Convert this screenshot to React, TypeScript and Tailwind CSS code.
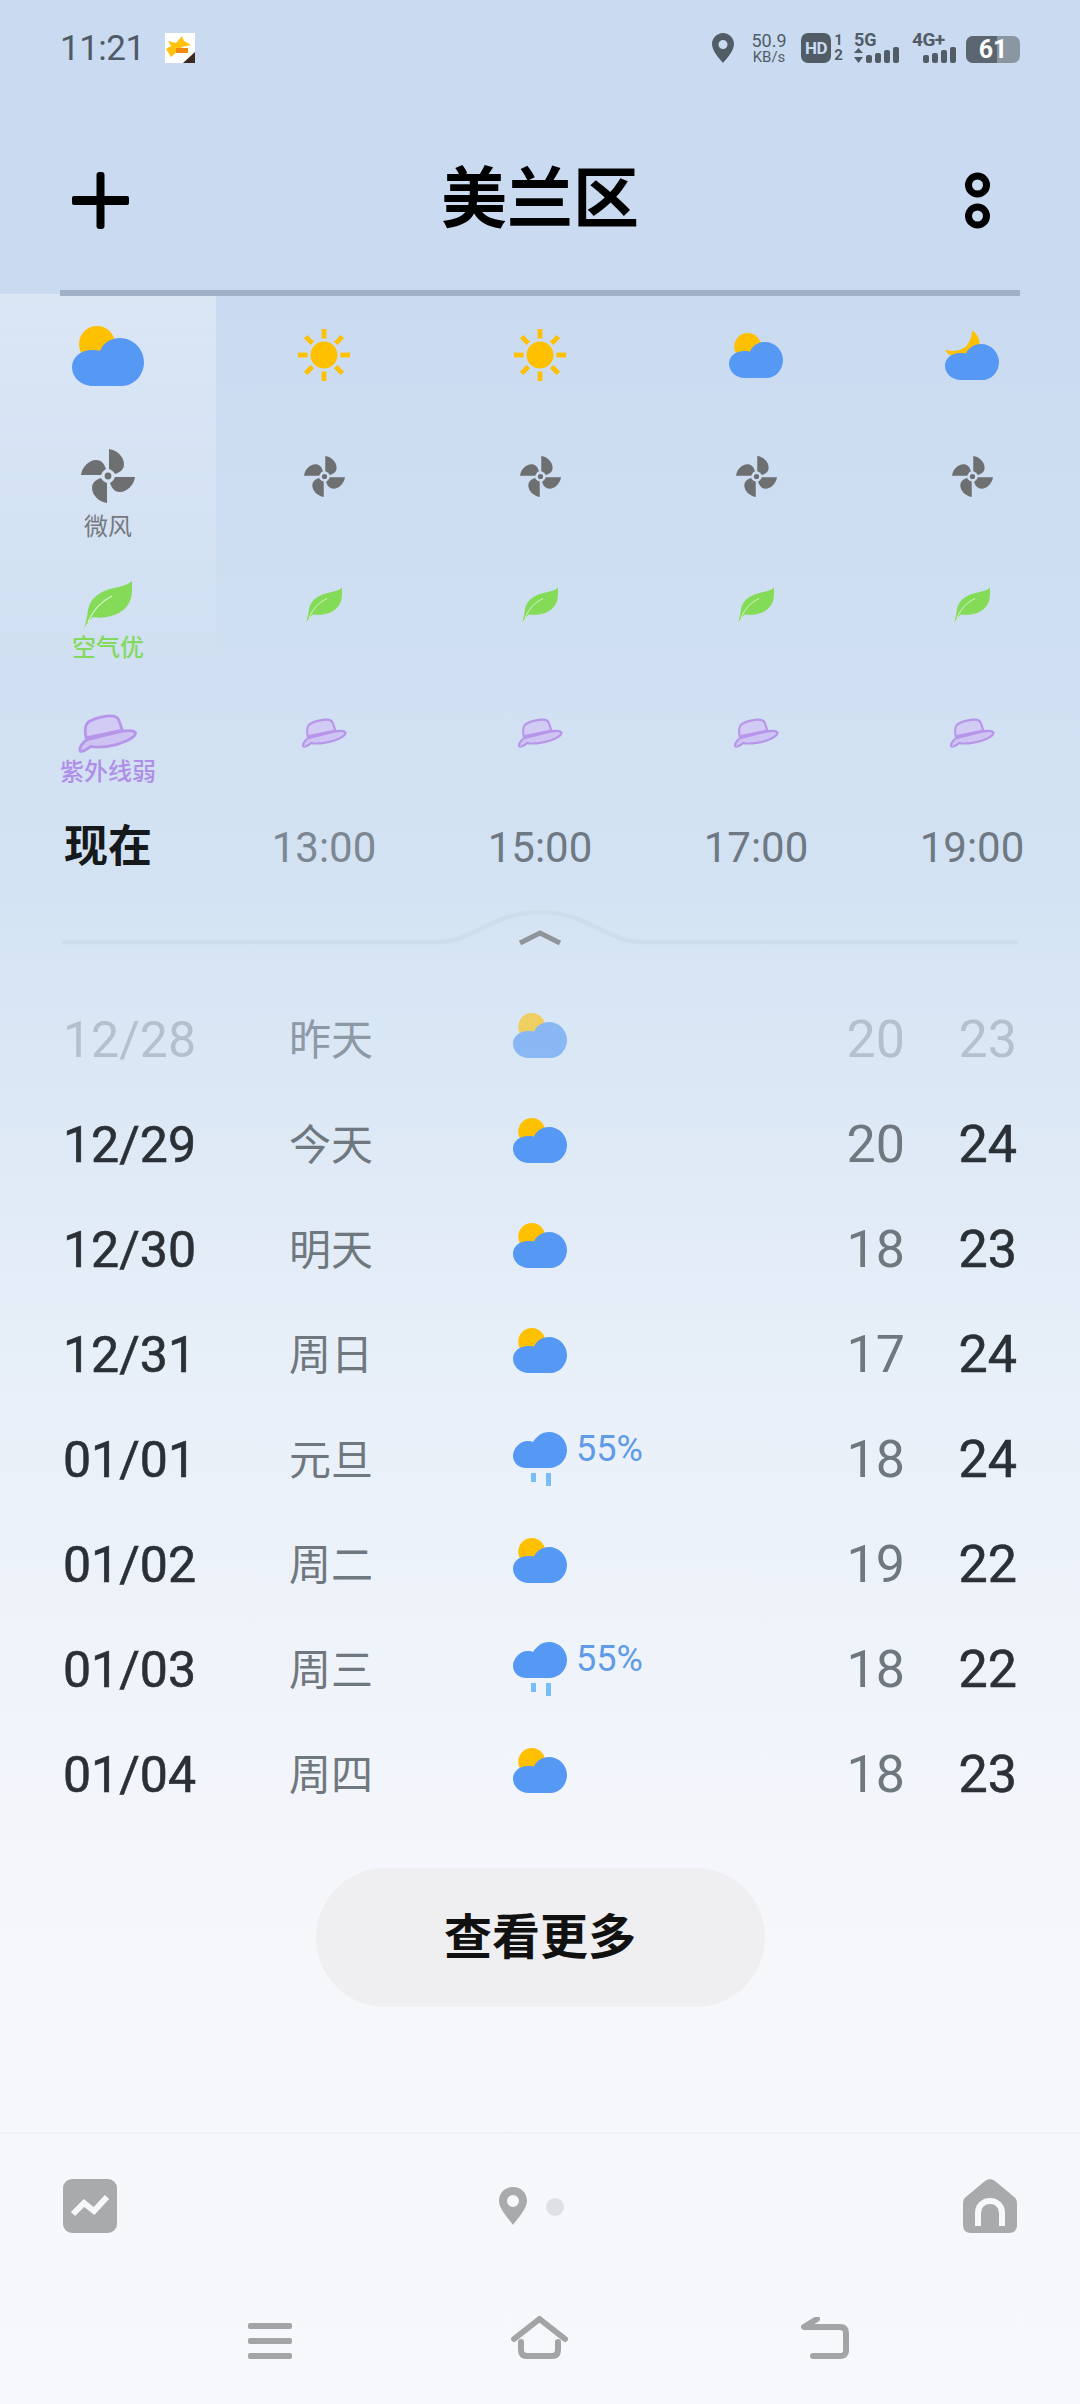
import React from "react";

const CLOUD = "M21 60C9 60 0 51 0 41C0 31 9 24 20 24C23 24 26 24 28 25C31 17 39 12 48 12C61 12 72 23 72 36C72 49 62 60 50 60Z";

function CloudSun({ w = 54, h = 45 }: { w?: number; h?: number }) {
  return (
    <svg width={w} height={h} viewBox="0 0 72 60" className="block">
      <circle cx="25" cy="18" r="18" fill="#ffc000" />
      <path d={CLOUD} fill="#5599f5" />
    </svg>
  );
}

function CloudMoon() {
  return (
    <svg width={54} height={50} viewBox="0 -6.6 72 66.6" className="block">
      <path d="M36 -6C44 -1 48 8 45 17C42 27 31 32 20 30C11 30 3 26 0 20C9 22 22 22 29 14C34 8 36 1 36 -6Z" fill="#ffc000" />
      <path d={CLOUD} fill="#5599f5" />
    </svg>
  );
}

function CloudRain() {
  return (
    <svg width={54} height={54} viewBox="0 0 54 54" className="block">
      <path d="M13 36C6 36 0 31 0 24C0 17 6 9 15 9C17 9 19 9 20 10C24 4 29 0 36 0C46 0 54 8 54 18C54 28 46 36 36 36Z" fill="#5599f5" />
      <rect x="18" y="41" width="5" height="9" fill="#79bdf5" />
      <rect x="33" y="41" width="5" height="13" fill="#79bdf5" />
    </svg>
  );
}

function Sun() {
  const angles = [0, 45, 90, 135, 180, 225, 270, 315];
  return (
    <svg width={52} height={52} viewBox="0 0 52 52" className="block">
      <circle cx="26" cy="26" r="13.5" fill="#ffc000" />
      {angles.map((a) => (
        <rect key={a} x="23.6" y="0" width="4.8" height="9.5" fill="#ffc000" transform={`rotate(${a} 26 26)`} />
      ))}
    </svg>
  );
}

function Wind({ size }: { size: number }) {
  const blade = "M28 0C36 1 43 8 43 15C43 20 40 23 34 25C33 23 31 21 28 20Z";
  return (
    <svg width={size} height={size} viewBox="0 0 54 54" className="block">
      {[0, 90, 180, 270].map((a) => (
        <path key={a} d={blade} fill="#6e6f71" transform={`rotate(${a} 27 27)`} />
      ))}
      <circle cx="27" cy="27" r="3.4" fill="#6e6f71" />
    </svg>
  );
}

function Leaf({ w, h }: { w: number; h: number }) {
  return (
    <svg width={w} height={h} viewBox="0 0 48 47" className="block">
      <path d="M48 0C44 4 38 5 30 7C16 10 6 17 4 29C3 36 2 42 0 47C3 42 6 39 9 36C13 37 20 37 27 35C40 32 48 22 48 10Z" fill="#84db57" />
      <path d="M4 41C9 29 16 21 28 15" fill="none" stroke="#dff5d2" strokeWidth="1.2" />
    </svg>
  );
}

function Hat({ w, h }: { w: number; h: number }) {
  return (
    <svg width={w} height={h} viewBox="-1 -1 62 42" className="block">
      <path d="M7 24C5 16 6 8 12 6C18 3 28 1 33 1C38 1 41 3 42 7L45 16Z" fill="#d2cbf5" stroke="#b796ea" strokeWidth="3" strokeLinejoin="round" />
      <path d="M8 26L45 17C52 16 58 16 59 19C59 24 44 31 30 33C22 34 16 34 12 33C8 36 3 39 1 38C-1 35 3 29 8 26Z" fill="#cdc4f3" stroke="#b796ea" strokeWidth="3" strokeLinejoin="round" />
    </svg>
  );
}

function Bars({ lead }: { lead?: boolean }) {
  return (
    <div className="flex items-end gap-[3px]">
      {lead && (
        <svg width="9" height="15" viewBox="0 0 9 15" className="block">
          <path d="M4.5 0L9 5H0Z M0 9H9L4.5 15Z" fill="#515c66" />
        </svg>
      )}
      <div className="w-[6px] h-[8px] rounded-[2px] bg-[#515c66]" />
      <div className="w-[6px] h-[10px] rounded-[2px] bg-[#515c66]" />
      <div className="w-[6px] h-[13px] rounded-[2px] bg-[#515c66]" />
      <div className="w-[6px] h-[16px] rounded-[2px] bg-[#515c66]" />
    </div>
  );
}

function StatusBar() {
  return (
    <div className="h-[96px] pl-[60px] pr-[60px] flex items-center">
      <span className="text-[35px] leading-none text-[#4f5a66] tracking-[-0.5px]">11:21</span>
      <svg width="30" height="30" viewBox="0 0 30 30" className="block ml-[20px]">
        <rect width="30" height="30" fill="#ffffff" />
        <path d="M3 8L11 10L17 3L19 8L26 12L17 14L14 17L6 24L1 16L6 13Z" fill="#ffc20e" />
        <rect x="11" y="15" width="12" height="5" fill="#f28a12" />
        <path d="M30 19V30H18Z" fill="#3a2a22" />
      </svg>
      <div className="flex-1" />
      <svg width="22" height="30" viewBox="0 0 22 30" className="block">
        <path fillRule="evenodd" d="M11 0C5 0 0 5 0 11C0 18 7 25 11 30C15 25 22 18 22 11C22 5 17 0 11 0ZM11 7A4.5 4.5 0 1 1 11 16A4.5 4.5 0 1 1 11 7Z" fill="#515c66" />
      </svg>
      <div className="ml-[16px] w-[38px] flex flex-col items-center text-[#515c66]">
        <span className="text-[18px] leading-[18px]">50.9</span>
        <span className="text-[15px] leading-[15px]">KB/s</span>
      </div>
      <div className="ml-[13px] w-[30px] h-[30px] rounded-[7px] bg-[#515c66] flex items-center justify-center">
        <span className="text-[17px] leading-none font-bold text-[#cadbf1] tracking-[-0.5px]">HD</span>
      </div>
      <div className="ml-[2px] w-[11px] flex flex-col items-center text-[#515c66] font-bold">
        <span className="text-[15px] leading-[15px]">1</span>
        <span className="text-[15px] leading-[15px]">2</span>
      </div>
      <div className="ml-[10px] w-[45px] flex flex-col items-start">
        <span className="text-[18px] leading-[14px] font-bold text-[#515c66]">5G</span>
        <Bars lead />
      </div>
      <div className="ml-[13px] w-[44px] flex flex-col items-end">
        <span className="text-[19px] leading-[14px] font-bold text-[#515c66] self-start tracking-[-0.5px]">4G+</span>
        <Bars />
      </div>
      <div className="ml-[10px] relative w-[54px] h-[27px] mt-[2px] rounded-[7px] overflow-hidden bg-[#8a96a2] flex items-center justify-center">
        <div className="absolute left-0 top-0 bottom-0 w-[31px] bg-[#5c6670]" />
        <span className="relative text-[25px] leading-none font-bold text-white">61</span>
      </div>
    </div>
  );
}

function Header() {
  return (
    <div className="h-[194px] pt-[14px] pl-[72px] pr-[90px] flex items-center justify-between">
      <svg width="57" height="57" viewBox="0 0 57 57" className="block">
        <rect x="24.5" y="0" width="8" height="57" rx="3" fill="#000" />
        <rect x="0" y="24" width="57" height="9" rx="2" fill="#000" />
      </svg>
      <span className="text-[66px] leading-none font-bold text-black mr-[14px]">美兰区</span>
      <svg width="25" height="57" viewBox="0 0 25 57" className="block">
        <circle cx="12.5" cy="13" r="9" fill="none" stroke="#000" strokeWidth="7" />
        <circle cx="12.5" cy="44" r="9" fill="none" stroke="#000" strokeWidth="7" />
      </svg>
    </div>
  );
}

type Col = { weather: React.ReactNode; wpt: number; time: string; timeColor: string };

const COLS: Col[] = [
  { weather: <Sun />, wpt: 33, time: "13:00", timeColor: "text-[#7d8791]" },
  { weather: <Sun />, wpt: 33, time: "15:00", timeColor: "text-[#6f7983]" },
  { weather: <CloudSun />, wpt: 37, time: "17:00", timeColor: "text-[#6f7983]" },
  { weather: <CloudMoon />, wpt: 34, time: "19:00", timeColor: "text-[#6f7983]" },
];

function Hourly() {
  return (
    <div className="flex">
      <div className="w-[216px] -mt-[2px] pt-[2px] flex flex-col items-center bg-[linear-gradient(180deg,rgba(255,255,255,0.32)_0,rgba(255,255,255,0)_380px)]">
        <div className="h-[124px] pt-[30px]"><CloudSun w={72} h={60} /></div>
        <div className="h-[125px] pt-[29px] flex flex-col items-center">
          <Wind size={54} />
          <span className="mt-[9px] text-[24px] leading-[30px] text-[#75797d]">微风</span>
        </div>
        <div className="h-[135px] pt-[36px] flex flex-col items-center">
          <Leaf w={48} h={47} />
          <span className="mt-[5px] text-[24px] leading-[30px] font-medium text-[#84d95f]">空气优</span>
        </div>
        <div className="h-[137px] pt-[34px] flex flex-col items-center">
          <Hat w={60} h={40} />
          <span className="mt-[3px] text-[24px] leading-[30px] font-medium text-[#b08fe8] whitespace-nowrap">紫外线弱</span>
        </div>
        <div className="h-[60px] flex items-center text-[44px] font-bold text-[#16191c] leading-none">现在</div>
      </div>
      {COLS.map((c) => (
        <div key={c.time} className="w-[216px] flex flex-col items-center">
          <div className="h-[124px]" style={{ paddingTop: c.wpt }}>{c.weather}</div>
          <div className="h-[125px] pt-[36px]"><Wind size={41} /></div>
          <div className="h-[135px] pt-[42px]"><Leaf w={36} h={36} /></div>
          <div className="h-[137px] pt-[38px]"><Hat w={45} h={31} /></div>
          <div className={`h-[60px] pt-[2px] flex items-center text-[42px] leading-none ${c.timeColor}`}>{c.time}</div>
        </div>
      ))}
    </div>
  );
}

function Separator() {
  return (
    <div className="mt-[33px] pl-[62px]">
      <svg width="956" height="36" viewBox="0 0 956 36" className="block">
        <path d="M0 32H378C410 32 430 2 478 2C526 2 546 32 578 32H956" fill="none" stroke="#cfdcec" strokeWidth="4.5" />
        <path d="M458 33L478 23L498 33" fill="none" stroke="#8f959b" strokeWidth="5" />
      </svg>
    </div>
  );
}

type Day = { date: string; label: string; icon: "cloud" | "rain"; low: string; high: string };

const DAYS: Day[] = [
  { date: "12/28", label: "昨天", icon: "cloud", low: "20", high: "23" },
  { date: "12/29", label: "今天", icon: "cloud", low: "20", high: "24" },
  { date: "12/30", label: "明天", icon: "cloud", low: "18", high: "23" },
  { date: "12/31", label: "周日", icon: "cloud", low: "17", high: "24" },
  { date: "01/01", label: "元旦", icon: "rain", low: "18", high: "24" },
  { date: "01/02", label: "周二", icon: "cloud", low: "19", high: "22" },
  { date: "01/03", label: "周三", icon: "rain", low: "18", high: "22" },
  { date: "01/04", label: "周四", icon: "cloud", low: "18", high: "23" },
];

function DayRow({ d, past }: { d: Day; past: boolean }) {
  return (
    <div className="h-[105px] pl-[63px] pr-[63px] flex items-center">
      <span className={`w-[226px] -mt-[2px] text-[50px] leading-none ${past ? "text-[#b4c0cc]" : "text-[#2a3036] [-webkit-text-stroke-width:0.6px]"}`}>{d.date}</span>
      <span className={`w-[224px] text-[42px] leading-none ${past ? "text-[#8d99a5]" : "text-[#70787f]"}`}>{d.label}</span>
      <div className="flex-1 flex items-center">
        <div className={d.icon === "cloud" ? `-mt-[10px] ${past ? "opacity-60" : ""}` : "-mt-[4px]"}>
          {d.icon === "cloud" ? <CloudSun /> : <CloudRain />}
        </div>
        {d.icon === "rain" && <span className="ml-[9px] -mt-[24px] text-[36px] leading-none text-[#5f9be6]">55%</span>}
      </div>
      <span className={`w-[100px] -mt-[2px] text-right text-[52px] leading-none ${past ? "text-[#b4c0cc]" : "text-[#70787f]"}`}>{d.low}</span>
      <span className={`w-[112px] -mt-[2px] text-right text-[52px] leading-none ${past ? "text-[#b4c0cc]" : "text-[#2a3036] [-webkit-text-stroke-width:0.6px]"}`}>{d.high}</span>
    </div>
  );
}

function Footer() {
  return (
    <div className="mt-[125px] border-t-[2px] border-[#eff1f4] pt-[45px]">
      <div className="px-[63px] flex items-center justify-between">
        <svg width="54" height="54" viewBox="0 0 54 54" className="block">
          <rect width="54" height="54" rx="9" fill="#a9aaac" />
          <path d="M10 35L21 24L31 32L44 18" fill="none" stroke="#f7f8fb" strokeWidth="6" />
        </svg>
        <div className="mr-[17px] flex items-center">
          <svg width="28" height="38" viewBox="0 0 28 38" className="block">
            <path fillRule="evenodd" d="M14 0C6 0 0 6 0 14C0 22 10 32 14 38C18 32 28 22 28 14C28 6 22 0 14 0ZM14 8A6 6 0 1 1 14 20A6 6 0 1 1 14 8Z" fill="#a9aaac" />
          </svg>
          <div className="ml-[19px] mt-[2px] w-[18px] h-[18px] rounded-full bg-[#dfe0e3]" />
        </div>
        <svg width="54" height="54" viewBox="0 0 54 54" className="block">
          <path d="M22 2C25 -0.5 29 -0.5 32 2L50 17C53 19 54 21 54 25V46C54 51 51 54 46 54H8C3 54 0 51 0 46V25C0 21 1 19 4 17Z" fill="#a9aaac" />
          <path d="M15 47V34C15 27 20 22 27 22C34 22 39 27 39 34V47" fill="none" stroke="#f7f8fb" strokeWidth="6" />
        </svg>
      </div>
      <div className="mt-[83px] pl-[248px] flex items-end">
        <div className="w-[44px] h-[36px] flex flex-col justify-between">
          <div className="h-[6px] rounded-[2px] bg-[#a3a4a6]" />
          <div className="h-[6px] rounded-[2px] bg-[#a3a4a6]" />
          <div className="h-[6px] rounded-[2px] bg-[#a3a4a6]" />
        </div>
        <svg width="57" height="43" viewBox="0 0 57 43" className="block ml-[219px]">
          <path d="M3 23L28.5 3L54 23" fill="none" stroke="#a3a4a6" strokeWidth="6" strokeLinecap="round" strokeLinejoin="round" />
          <path d="M10 26V34C10 38 12 40 16 40H41C45 40 47 38 47 34V26" fill="none" stroke="#a3a4a6" strokeWidth="6" strokeLinecap="round" />
        </svg>
        <svg width="48" height="42" viewBox="0 0 48 42" className="block ml-[233px]">
          <path d="M16 2L3 10H39C43 10 45 12 45 16V34C45 37 43 39 39 39H12" fill="none" stroke="#a3a4a6" strokeWidth="6" strokeLinecap="round" strokeLinejoin="round" />
        </svg>
      </div>
    </div>
  );
}

export default function App() {
  return (
    <div className="w-[1080px] h-[2404px] overflow-hidden font-[Roboto,'Noto_Sans_CJK_SC',sans-serif] bg-[linear-gradient(180deg,#cadbf1_0,#cadbf1_300px,#d4e3f3_900px,#e9f0f9_1400px,#f6f7fb_1950px,#f7f8fb_2404px)]">
      <StatusBar />
      <Header />
      <div className="h-[6px] mx-[60px] bg-[#a0b1c5] relative z-10" />
      <Hourly />
      <Separator />
      <div className="mt-[42px]">
        {DAYS.map((d, i) => (
          <DayRow key={d.date} d={d} past={i === 0} />
        ))}
      </div>
      <div className="mt-[40px] flex justify-center">
        <div className="w-[449px] h-[139px] rounded-full bg-[#efeff1] flex items-center justify-center">
          <span className="text-[48px] leading-none font-bold text-[#111]">查看更多</span>
        </div>
      </div>
      <Footer />
    </div>
  );
}
